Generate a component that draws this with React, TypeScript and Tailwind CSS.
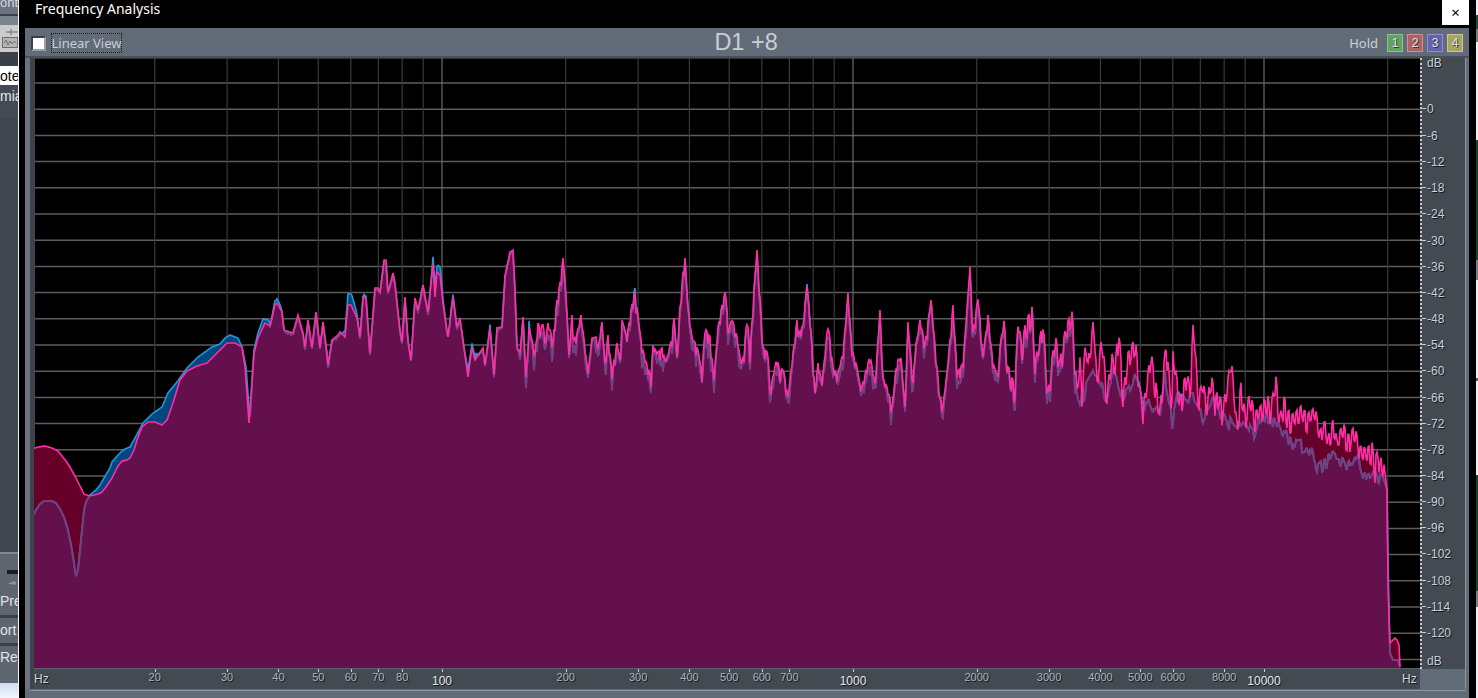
import React from 'react';

type Pt = [number, number];

// pink trace, read off the reference in page pixels
const redPts: Pt[] = [
  [32,449],[38,447],[45,446],[52,448],[58,451],[62,456],[66,461],[70,467],[76,478],[80,486],[84,494],[88,495.5],[92,495.5],[98,494],[102,492],[106,487],[112,478],[118,466],[122,461],[127,460],[130,458],[134,450],
  [137,440],[142,427],[148,422],[155,422],[162,425],[167,420],[173,403],[180,380],[187,371],[197,366],[207,363],[215,355],[222,348],[227,343],[235,343],[242,347],[245,367],[249,423],[252,380],[254,353],[258,338],[265,323],[270,326],
  [275,305],[277,303],[282,312],[284,330],[293,333],[298,315],[303,333],[305,347],[308,320],[312,347],[316,312],[320,348],[323,322],[327,353],[328,365],[332,340],[338,335],[340,332],[345,337],[348,305],[351,305],[357,318],[360,337],[363,297],[366,298],[370,353],[375,288],[378,288],[380,292],[384,260],[386,260],[388,292],[393,273],[395,283],[400,330],[402,342],[405,297],[408,340],[411,360],[415,298],[418,310],[423,285],[428,312],[433,263],[435,297],[437,272],[440,275],[443,303],[448,337],[453,297],[457,327],[460,318],[463,340],[468,377],[472,347],[475,360],[483,348],[485,365],[490,328],[494,375],[497,328],[502,327],[505,277],[510,252],[513,250],[515,290],[517,347],
  [520,353],[523,317],[526,377],[529,327],[535,353],[538,323],[541,330],[543,320],[545,343],[548,323],[553,340],[557,300],[560,283],[563,258],[565,280],[567,313],[569,355],[572,315],[574,340],[577,333],[581,315],[585,347],[588,373],[592,338],[596,337],[598,348],[602,322],[605,363],[608,335],[612,373],[617,343],[620,360],[622,320],[627,337],[631,310],[635,292],[637,310],[642,347],[647,365],[651,377],[653,345],[657,353],[662,348],[665,360],[668,355],[672,337],[674,318],[677,357],[680,307],[683,273],[685,258],[688,307],[692,337],[697,347],[702,372],[705,328],[710,337],[714,380],[718,327],[722,305],[726,288],[728,333],[732,318],[737,337],[741,363],[744,355],[747,315],[750,353],[754,290],[757,250],[760,297],[763,347],[768,353],[770,390],[777,357],[780,373],[783,367],[788,397],[793,353],[797,320],[799,333],
  [803,325],[807,285],[810,317],[815,393],[818,363],[822,383],[828,323],[833,367],[837,377],[843,353],[848,293],[852,350],[857,367],[861,390],[870,355],[875,383],[880,310],[883,378],[887,387],[892,407],[897,360],[901,358],[905,407],[908,322],[913,383],[915,350],[920,320],[925,343],[931,300],[937,367],[940,397],[943,405],[947,373],[953,305],[957,373],[963,363],[970,267],[973,333],[978,297],[983,357],[988,315],[993,363],[998,377],[1003,313],[1008,367],[1015,387],[1018,315],[1022,350],[1025,327],[1032,308],[1035,363],[1043,322],[1048,393],[1055,335],[1060,360],[1067,323],[1072,313],[1077,390],
  [1080,360],[1082,390],[1086,335],[1088,363],[1092,333],[1094,317],[1097,383],[1102,333],[1107,397],[1111,353],[1115,363],[1119,328],[1123,397],[1128,355],[1135,338],[1140,387],[1143,407],[1151,352],[1155,380],[1160,407],[1166,343],[1172,403],[1173,353],[1180,400],[1187,370],[1190,390],[1193,327],[1195,340],[1198,397],[1203,380],[1207,407],[1211,372],[1215,400],[1218,390],[1223,410],[1231,358],[1237,423],[1241,383],[1245,413],[1250,395],[1255,413],[1262,405],[1268,397],[1270,410],[1276,378],[1280,417],[1284,398],[1288,413],[1293,415],[1302,407],[1307,417],[1315,408],[1320,432],[1325,422],[1328,437],[1333,422],[1337,440],[1343,425],[1348,437],[1355,428],[1360,447],[1367,450],[1372,444],[1375,463],[1378,447],[1380,465],[1382,453],[1385,473],[1387,490],
  [1387.5,560],[1389,620],[1390,643],[1393,640],[1395,638],[1397,640],[1399,645],[1400,667],
];

const blueLow: Pt[] = [
  [32,518],[36,510],[40,504],[44,501],[52,501],[56,503],[60,509],[64,517],[68,530],[72,550],[75,570],[76,576],[78,570],[82,530],[84,510],[86,502],[90,495],[96,490],[100,485],[104,478],[110,468],[112,462],[118,455],[122,451],[125,449],[130,447],[135,438],
  [143,423],[152,414],[162,407],[168,393],[177,382],[187,368],[198,357],[212,347],[220,344],[225,338],[230,335],[238,338],[242,347],[246,367],[249,407],[250,417],[252,383],[254,350],[258,333],[263,319],[268,320],[270,322],
];

const blueHigh: Pt[] = [
  [1075,388],[1080,395],[1093,368],[1097,372],[1107,395],[1113,358],[1123,392],[1135,372],[1145,398],[1160,406],[1165,370],[1172,415],[1177,392],[1193,388],[1203,410],[1213,396],[1237,425],[1243,408],[1253,430],[1263,408],[1277,418],[1297,440],[1307,438],[1318,461],[1333,451],[1347,458],[1357,445],[1363,471],[1373,466],[1383,475],[1387,490],
  [1388,560],[1389,610],[1390,653],[1393,660],[1398,660],[1400,667],
];

// spots where the blue trace pokes above the pink one
const blueBumps: [number, number, number][] = [
  [277,6,6],[348,11,5],[354,9,4],[365,4,3],[320,2,3],[434,8,3],[440,9,4],[452,4,3],[469,8,4],[476,5,3],[490,4,3],[505,3,3],[529,8,2],[635,6,3],[630,3,3],[672,3,2],[697,3,3],[702,4,2],[797,5,3],[807,3,2],[811,3,3],[828,3,3],[835,3,2],[1043,3,2],
];

const interp = (pts: Pt[], x: number) => {
  if (x <= pts[0][0]) return pts[0][1];
  for (let i = 1; i < pts.length; i++) {
    if (x <= pts[i][0]) {
      const [x0, y0] = pts[i - 1];
      const [x1, y1] = pts[i];
      return y0 + ((y1 - y0) * (x - x0)) / (x1 - x0);
    }
  }
  return pts[pts.length - 1][1];
};

const hash = (n: number) => {
  const s = Math.sin(n * 127.1 + 311.7) * 43758.5453;
  return s - Math.floor(s);
};

const xs: number[] = [];
for (let x = 32; x < 1400; x += 1) xs.push(x);
xs.push(1400);

const redY = xs.map((x) => {
  const base = interp(redPts, x);
  if (x < 520 || x > 1384) return base;
  if (x < 1000) return base + (x % 3 === 0 ? hash(x) * 11 : 0);
  // top end is a dense comb of spikes
  return base + (x % 4 < 2 ? hash(x) * 3 - 3 : 6 + hash(x) * 14);
});

const blueY = xs.map((x, i) => {
  if (x < 270) return interp(blueLow, x);
  if (x >= 1075) return interp(blueHigh, x) + (x < 1385 ? hash(Math.floor(x / 2) + 50) * 14 : 0);
  const h = hash(x + 900);
  let d = x < 520 ? 0.5 + h * 2.5 : 1 + h * h * 14;
  blueBumps.forEach(([c, a, w]) => {
    d -= a * Math.exp(-(((x - c) / w) ** 2));
  });
  return redY[i] + d;
});

const floorY = 668;
const toLine = (ys: number[]) => ys.map((y, i) => `${i ? 'L' : 'M'}${xs[i]},${y.toFixed(1)}`).join(' ');
const toFill = (ys: number[]) => `${toLine(ys)} L1400,${floorY} L32,${floorY} Z`;
const lowerY = redY.map((y, i) => Math.max(y, blueY[i]));

const freqX = (f: number) => 853 + 411 * Math.log10(f / 1000);
const gridFreqs = [20,30,40,50,60,70,80,90,100,200,300,400,500,600,700,800,900,1000,2000,3000,4000,5000,6000,7000,8000,9000,10000,20000];
const decades = [100, 1000, 10000];
const dbLines = Array.from({ length: 23 }, (_, i) => 83 + i * 26.2);

const dbLabels: [string, number][] = [
  ['dB', 62],['0', 108],['-6', 135],['-12', 161],['-18', 187],['-24', 213],['-30', 240],['-36', 266],['-42', 292],['-48', 318],['-54', 344],['-60', 370],['-66', 397],['-72', 423],['-78', 449],['-84', 475],['-90', 501],['-96', 527],['-102', 553],['-108', 580],['-114', 606],['-120', 632],['dB', 660],
];
const freqLabels = [20,30,40,50,60,70,80,100,200,300,400,500,600,700,1000,2000,3000,4000,5000,6000,8000,10000];

const Spectrum = () => (
  <svg className="block" width={1386} height={611} viewBox="34 58 1386 611">
    <defs>
      <clipPath id="redArea">
        <path d={toFill(redY)} />
      </clipPath>
    </defs>
    <rect x={34} y={58} width={1386} height={611} fill="#000" />
    {dbLines.map((y) => (
      <line key={y} x1={34} x2={1420} y1={y} y2={y} stroke="#5c5c5c" strokeWidth={1.5} />
    ))}
    <line x1={34} x2={1420} y1={58.5} y2={58.5} stroke="#333" />
    <line x1={34.5} x2={34.5} y1={58} y2={669} stroke="#444" />
    {gridFreqs.map((f) => (
      <line key={f} x1={freqX(f)} x2={freqX(f)} y1={58} y2={669} stroke={decades.includes(f) ? '#6a6a6a' : '#3a3a3a'} strokeWidth={1.2} />
    ))}
    <path d={toFill(blueY)} fill="#00467f" />
    <path d={toFill(redY)} fill="#660028" />
    <path d={toFill(lowerY)} fill="#64104c" />
    <path d={toLine(blueY)} fill="none" stroke="#1b9ddb" strokeWidth={1.6} />
    <path d={toLine(blueY)} fill="none" stroke="#74407f" strokeWidth={2} clipPath="url(#redArea)" />
    <path d={toLine(redY)} fill="none" stroke="#ff2da6" strokeWidth={1.6} />
    <rect x={34} y={668} width={1386} height={1} fill="#5a616c" />
  </svg>
);

const LeftStrip = () => (
  <div className="w-[19px] shrink-0 h-full flex flex-col border-r border-[#f4f4f4] text-[13px] font-['Liberation_Sans',sans-serif] overflow-hidden leading-none">
    <div className="h-[14px] bg-[#6b7280] text-[#d5d9de] flex items-end overflow-hidden"><span className="mb-[5px]">onte</span></div>
    <div className="h-[2px] bg-[#3b4048]" />
    <div className="h-[9px] bg-[#7b838e]" />
    <div className="h-[27px] bg-[#cbcbcb] flex items-center justify-center">
      <svg width="18" height="20" viewBox="0 0 18 20" fill="none" stroke="#6e6e6e">
        <path d="M6 3h12M11 0v6" />
        <rect x="2.5" y="8.5" width="15" height="10" fill="#b4b4b4" />
        <path d="M4 14l2-3 2 5 2-4 2 3 2-3 2 2" />
      </svg>
    </div>
    <div className="h-[14px] bg-[#3b4048]" />
    <div className="h-[19px] bg-white text-black flex items-center text-[14px]">ote</div>
    <div className="h-[33px] bg-[#444a53] text-[#e6e8ea] text-[14px] pt-[4px]">mia</div>
    <div className="h-[434px] bg-[#40464e]" />
    <div className="h-[2px] bg-[#808894]" />
    <div className="h-[36px] bg-[#5d6571] flex flex-col items-end pt-[16px]">
      <div className="w-[11px] h-[4px] bg-[#1c1e22]" />
      <div className="text-[7px] text-[#d0d4d8] mt-[5px] mr-[2px]">-∞</div>
    </div>
    <div className="h-[25px] bg-[#5d6571] text-[#e0e3e6] text-[14px] pt-[4px]">Pre</div>
    <div className="h-[3px] bg-[#3b4048]" />
    <div className="h-[25px] bg-[#5d6571] text-[#e0e3e6] text-[14px] pt-[5px]">ort</div>
    <div className="h-[3px] bg-[#3b4048]" />
    <div className="h-[22px] bg-[#5d6571] text-[#e0e3e6] text-[14px] pt-[4px]">Rec</div>
    <div className="h-[15px] bg-[#5d6571]" />
    <div className="flex-1 bg-gradient-to-b from-[#cfdcf0] to-[#f2f5fb]" />
  </div>
);

const RightStrip = () => (
  <div className="w-[2px] shrink-0 h-full flex flex-col bg-[#eef0f5]">
    <div className="h-[15px]" />
    <div className="h-[14px] bg-[#1d4a3a]" />
    <div className="h-[13px] bg-[#767c84]" />
    <div className="h-[98px]" />
    <div className="h-[120px] bg-[#17432f]" />
    <div className="h-[20px] bg-[#767c84]" />
    <div className="h-[98px]" />
    <div className="h-[3px] bg-[#555b63]" />
    <div className="h-[94px]" />
    <div className="h-[116px] bg-[#17432f]" />
    <div className="h-[16px] bg-[#767c84]" />
  </div>
);

const holdButtons = [
  ['1', 'bg-[#5fa35f] border-[#8cc48c]'],
  ['2', 'bg-[#ae6262] border-[#cf9090]'],
  ['3', 'bg-[#6262ae] border-[#9090cf]'],
  ['4', 'bg-[#a6a662] border-[#c8c890]'],
];

const labelText = "font-['Liberation_Sans',sans-serif] [text-shadow:1px_1px_0_#15171a]";

export default function App() {
  return (
    <div className="w-[1478px] h-[698px] bg-black flex overflow-hidden">
      <LeftStrip />
      <div className="ml-[6px] mr-[7px] w-[1444px] shrink-0 flex flex-col">
        {/* title bar */}
        <div className="h-[28px] shrink-0 flex items-start">
          <div className="ml-[10px] mt-[-1px] text-white text-[14px] leading-[20px] font-['Noto_Sans',sans-serif]">Frequency Analysis</div>
          <div className="ml-auto w-[27px] h-[25px] bg-white flex items-center justify-center text-black text-[15px] font-['Noto_Sans',sans-serif] leading-none">×</div>
        </div>

        <div className="flex-1 min-h-0 bg-[#626b78] flex flex-col">
          {/* header */}
          <div className="h-[30px] shrink-0 flex items-center pl-[6px] pr-[6px] pt-[2px] relative border-b-2 border-[#4a5059]">
            <div className="w-[15px] h-[15px] bg-white border-2 border-t-[#3c4047] border-l-[#3c4047] border-r-[#9aa0a8] border-b-[#9aa0a8]" />
            <div className="ml-[5px] h-[20px] w-[71px] border border-dotted border-[#15171a] flex items-center justify-center text-[#c9ced6] text-[13px] font-['Noto_Sans',sans-serif] leading-none whitespace-nowrap">Linear View</div>
            <div className="flex-1 text-center text-[23.5px] leading-none text-[#c9ced6] font-['Liberation_Sans',sans-serif] ml-[21px]">D1 +8</div>
            <div className="text-[#cdd2d9] text-[13px] mr-[9px] font-['Noto_Sans',sans-serif] leading-none">Hold</div>
            <div className="flex gap-[4px]">
              {holdButtons.map(([n, c]) => (
                <div key={n} className={`w-[16px] h-[18px] border flex items-center justify-center text-[12px] leading-none text-[#e2e4e6] font-['Liberation_Sans',sans-serif] [text-shadow:1px_1px_0_#333] ${c}`}>{n}</div>
              ))}
            </div>
          </div>

          {/* chart with axes */}
          <div className="flex">
            <div className="w-[9px] shrink-0 flex">
              <div className="w-[5px] bg-[#6a7380]" />
              <div className="w-[4px] bg-[#3d434b]" />
            </div>
            <div className="w-[1386px] shrink-0 flex flex-col">
              <Spectrum />
              <div className="h-[20px] bg-[#434a52] relative">
                <div className={`absolute left-0 top-[4px] text-[12px] leading-none text-[#d0d6dc] ${labelText}`}>Hz</div>
                <div className={`absolute left-[1368px] top-[4px] text-[12px] leading-none text-[#d0d6dc] ${labelText}`}>Hz</div>
                {freqLabels.map((f) => {
                  const major = decades.includes(f);
                  return (
                    <React.Fragment key={f}>
                      <div className="absolute top-0 w-px h-[3px] bg-[#c8ccd0]" style={{ left: freqX(f) - 34 }} />
                      <div
                        className={`absolute -translate-x-1/2 leading-none ${labelText} ${major ? 'top-[6px] text-[12px] text-[#e6e9ec]' : 'top-[3px] text-[11px] text-[#aeb5bd]'}`}
                        style={{ left: freqX(f) - 34 }}
                      >
                        {f}
                      </div>
                    </React.Fragment>
                  );
                })}
              </div>
            </div>
            <div className="w-[45px] shrink-0 bg-[#434a52] relative border-l-2 border-dotted border-[#c8ccd0]">
              {dbLabels.map(([t, y], i) => (
                <React.Fragment key={i}>
                  {i > 0 && i < dbLabels.length - 1 && <div className="absolute left-0 w-[4px] h-px bg-[#c8ccd0]" style={{ top: y - 58 }} />}
                  <div className={`absolute left-[5px] -translate-y-1/2 text-[12px] leading-none text-[#c8d0d8] ${labelText}`} style={{ top: y - 57 }}>{t}</div>
                </React.Fragment>
              ))}
              <div className="absolute left-[-2px] right-0 top-[611px] h-[20px] bg-[#626b78]" />
            </div>
            <div className="flex-1 flex">
              <div className="w-px bg-[#8e96a2]" />
              <div className="flex-1" />
            </div>
          </div>

          <div className="flex-1 mt-px border-t border-[#8e96a2] ml-[5px] mr-[3px]" />
        </div>
      </div>
      <RightStrip />
    </div>
  );
}
